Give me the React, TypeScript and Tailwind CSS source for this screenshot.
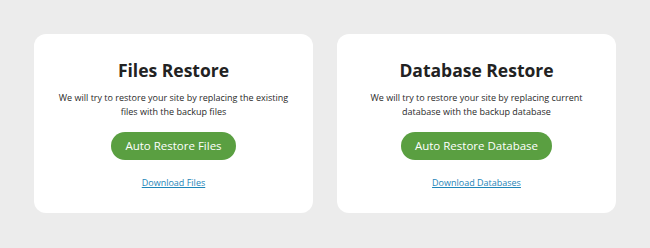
const cards = [
  {
    title: 'Files Restore',
    lines: ['We will try to restore your site by replacing the existing', 'files with the backup files'],
    button: 'Auto Restore Files',
    link: 'Download Files',
  },
  {
    title: 'Database Restore',
    lines: ['We will try to restore your site by replacing current', 'database with the backup database'],
    button: 'Auto Restore Database',
    link: 'Download Databases',
  },
]

export default function App() {
  return (
    <div className="flex h-[248px] w-[650px] gap-6 bg-[#ececec] p-[34px] font-['Open_Sans',sans-serif]">
      {cards.map((c) => (
        <div
          key={c.title}
          className="flex h-[179px] flex-1 flex-col items-center rounded-xl bg-white pt-[25px] text-center"
        >
          <h2 className="text-[17.5px] font-bold leading-[22px] text-[#222]">{c.title}</h2>
          <p className="mt-[10px] text-[9px] leading-[14px] text-[#2a2a2a]">
            {c.lines[0]}
            <br />
            {c.lines[1]}
          </p>
          <button className="mt-[13px] h-[28px] rounded-full bg-[#5a9f41] px-[14px] text-[11.5px] text-white">
            {c.button}
          </button>
          <a href="#" className="mt-[16px] text-[9px] leading-[14px] text-[#1e85b8] underline">
            {c.link}
          </a>
        </div>
      ))}
    </div>
  )
}
